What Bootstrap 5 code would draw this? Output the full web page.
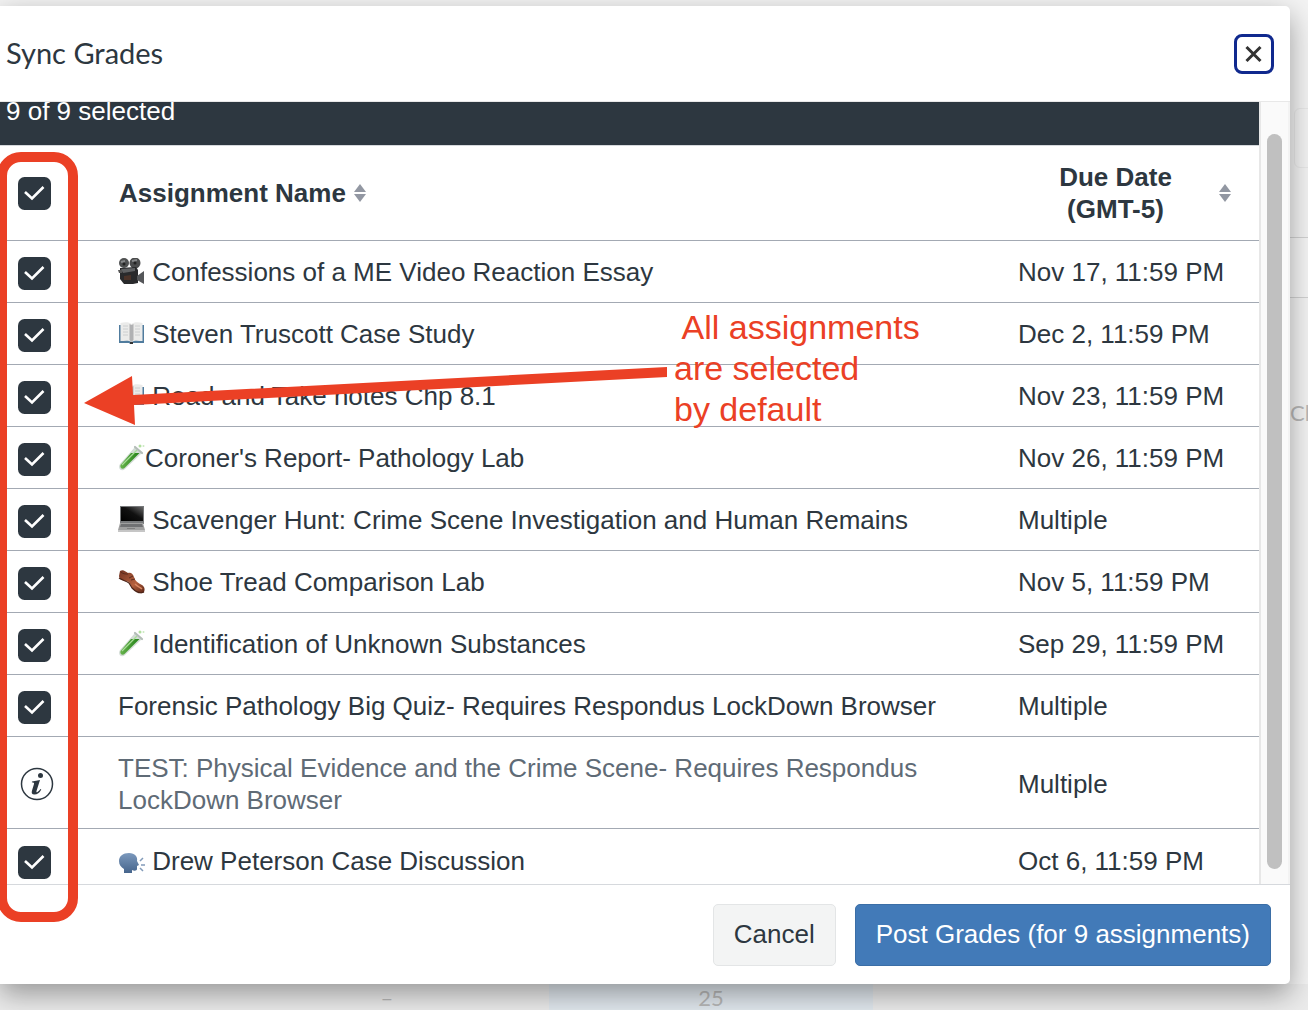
<!DOCTYPE html>
<html lang="en">
<head>
<meta charset="utf-8">
<meta name="viewport" content="width=device-width, initial-scale=1">
<title>Sync Grades</title>
<link rel="stylesheet" href="https://cdn.jsdelivr.net/npm/bootstrap@5.3.0/dist/css/bootstrap.min.css">
<style>
:root { --ink: #2d3740; --red: #eb4025; --line: #a3a9b3; }
body { font-family: "Liberation Sans", Arial, sans-serif; font-size: 26px; line-height: 32px; color: var(--ink); background: #f3f3f3; }
.stage { min-height: 100vh; }
/* gradebook behind the dialog */
.gradebook { z-index: 0; color: #b8b8b8; font: 22px/24px Lato, sans-serif; }
.side-rail { width: 60px; margin-right: -42px; background: #f3f3f3; }
.side-top { height: 108px; }
.side-box { height: 60px; border: 1px solid #e8e8e8; border-radius: 6px; margin-left: 4px; }
.side-gap { height: 69px; }
.side-band { height: 61px; border: solid #d2d2d2; border-width: 1px 0; background: #f5f5f5; }
.side-blank { height: 103px; }
.grade-row { height: 26px; background: #ebebeb; text-align: center; }
.grade-first { width: 225px; }
.grade-cell { width: 324px; padding-top: 2px; }
.grade-blue { background: #e1e8ee; }
/* dialog */
.dialog-box { z-index: 1; height: calc(100vh - 32px); margin: 6px 18px 26px 0; background: #fff; border-radius: 0 5px 5px 0; box-shadow: 0 10px 28px rgba(0,0,0,.36); }
.dialog-head { height: 96px; padding: 0 16px 0 6px; border-bottom: 1px solid #e8e8e8; }
.dialog-title { font: 29px/36px Lato, sans-serif; padding-bottom: 2px; }
.close-btn { width: 40px; height: 40px; border: 3px solid #10298e; border-radius: 8px; background: #fff; }
.scroll-pane { min-height: 0; }
.sheet { min-width: 0; }
.count-bar { height: 64px; margin-top: -21px; padding: 14px 6px; background: var(--ink); color: #fff; }
.assign { table-layout: fixed; color: var(--ink); border-top: 1px solid #d5d8dc; }
.assign th, .assign td { height: 62px; padding: 0 16px; vertical-align: middle; border-bottom: 1px solid var(--line); text-align: left; }
.assign thead th { height: 95px; }
.assign .tall td { height: 92px; padding-top: 2px; }
.assign .last td { height: 64px; }
.assign .pick { width: 102px; padding: 0 18px; }
.assign .due { width: 257px; padding-right: 28px; }
.assign td.due { padding-right: 0; white-space: nowrap; }
.tick { display: block; width: 33px; height: 33px; margin: 3px 0 0; border: 0; border-radius: 7px; }
thead .tick { margin-top: 0; }
.form-check-input.tick:checked { background-color: var(--ink); background-image: url("data:image/svg+xml,%3Csvg xmlns='http://www.w3.org/2000/svg' viewBox='0 0 33 33'%3E%3Cpath d='M7 15l7 6.500L25.500 10' fill='none' stroke='%23fff' stroke-width='2.600'/%3E%3C/svg%3E"); background-size: 100%; }
.sort-btn { font-weight: bold; color: inherit; background: none; border: 0; padding: 0 0 0 1px; }
.due .sort-btn { padding: 0; }
.due-label { padding-right: 6px; }
.pic { width: 27px; height: 27px; vertical-align: -4px; }
.muted-name { color: #5f6b76; }
.rail { width: 31px; padding: 32px 6px 15px 6px; background: #fafafa; border-left: 2px solid #e7e7e7; border-right: 2px solid #f3f3f3; }
.thumb { width: 17px; background: #c0c0c0; border-radius: 9px; }
.dialog-foot { height: 100px; padding: 19px 19px 18px; gap: 19px; border-top: 1px solid #d6d9dd; }
.foot-btn { font-size: 26px; line-height: 32px; padding: 13px 20px 15px; border-radius: 5px; }
.foot-cancel { color: var(--ink); background: #f3f4f4; border-color: #e3e5e6; }
.foot-post { color: #fff; background: #427ab8; border-color: #3b6ea6; }
/* annotations drawn over the dialog */
.note-ring { z-index: 3; left: -3px; top: 152px; width: 81px; height: 770px; border: 10px solid var(--red); border-radius: 24px; pointer-events: none; }
.note-arrow { z-index: 3; left: 84px; top: 360px; pointer-events: none; }
.note-text { z-index: 3; left: 674px; top: 307px; color: var(--red); font-size: 34px; line-height: 41px; white-space: pre; pointer-events: none; }
</style>
<script defer src="https://cdn.jsdelivr.net/npm/bootstrap@5.3.0/dist/js/bootstrap.bundle.min.js"></script>
</head>
<body>
<svg width="0" height="0" class="position-absolute" aria-hidden="true">
  <defs>
    <linearGradient id="liquid" x1="0" x2="1"><stop stop-color="#67b34c"/><stop offset="1" stop-color="#248319"/></linearGradient>
    <linearGradient id="screen" x1="0" y1="1" x2="1" y2="0"><stop stop-color="#000"/><stop offset=".55" stop-color="#111"/><stop offset="1" stop-color="#666"/></linearGradient>
    <linearGradient id="leather" x1="0" y1="0" x2="1" y2="1"><stop stop-color="#713323"/><stop offset=".6" stop-color="#b5603d"/><stop offset="1" stop-color="#572214"/></linearGradient>
    <linearGradient id="headfill" x2="0" y2="1"><stop stop-color="#7c99bd"/><stop offset="1" stop-color="#46658c"/></linearGradient>
    <symbol id="sort" viewBox="0 0 12 20"><path d="M6 1l6 8H0zM6 19l6-8H0z" fill="#9297a2"/></symbol>
    <symbol id="book" viewBox="0 0 27 27"><path d="M1 5h25v18H15l-1 1h-2l-1-1H1z" fill="#507c9e"/><path d="M2.500 3c4-1 9-1 11 1v18c-3-2-7-1-11-1zM24.500 3c-4-1-9-1-11 1v18c3-2 7-1 11-1z" fill="#ebebea"/><path d="M11.500 4l2 1v17l-2-2zM13.500 5l2-1v16l-2 2z" fill="#b0b1b3"/><path d="M5 6h5M5 9h5M5 12h5M5 15h5M17 6h5M17 9h5M17 12h5M17 15h5" stroke="#c4c6c9" stroke-width=".8"/><path d="M12 22h3v2h-3z" fill="#333"/></symbol>
    <symbol id="tube" viewBox="0 0 27 27"><path d="M17 3l7 6L7 25c-3 3-8 0-5-5z" fill="#d3dcd6"/><path d="M13 9h8.500L6.500 24c-2 2-5 0-4-3z" fill="url(#liquid)"/><path d="M4 21L19 6" stroke="#a8dc98" stroke-width="1.200"/><path d="M17 3l7 6" stroke="#b4bdb8" stroke-width="2.200" stroke-linecap="round"/><circle cx="22" cy="2" r="1.500" fill="#b2e0a0"/><circle cx="25.500" cy="2" r="1" fill="#caeabf"/></symbol>
    <symbol id="camera" viewBox="0 0 27 27"><circle cx="6" cy="5" r="5" fill="#4f5152"/><circle cx="17" cy="5" r="5.500" fill="#4a4b4c"/><path d="M3 4l4-1M14 3l5-1" stroke="#858789" stroke-width="2"/><circle cx="6" cy="6" r="1.500" fill="#222"/><circle cx="17" cy="5" r="1.500" fill="#222"/><path d="M2 10l16-1 2 3v13l-5 1H6l-4-5z" fill="#292a2c"/><path d="M3 11l14-1v3l-12 2z" fill="#606264"/><path d="M19 18l7-5v13l-7-4z" fill="#55575a"/><path d="M6 18l7-1v5H6z" fill="#4b3329"/><path d="M0 12h4v3H1z" fill="#555"/></symbol>
    <symbol id="laptop" viewBox="0 0 27 27"><path d="M2 0h24v18H2z" fill="#77797b"/><path d="M3 1h22v14H3z" fill="url(#screen)"/><path d="M2 17h23l2 7H0z" fill="#a0a0a0"/><path d="M3 18h21l1 3H2z" fill="#707173"/><path d="M9 22h8v1H9z" fill="#808080"/><path d="M0 24h27v2H0z" fill="#c6c6c6"/></symbol>
    <symbol id="shoe" viewBox="0 0 27 27"><path d="M2 3c3-2 5 0 8 2 3-1 5 1 6 4 1 4 4 6 8 8 3 2 3 5 2 7-3 3-8 0-12-4l-3-6C5 13 1 11 1 8z" fill="url(#leather)"/><path d="M1 10c3 2 7 3 10 5l3 5c4 4 8 6 12 4" fill="none" stroke="#4b2418" stroke-width="1.200"/><path d="M3 4c2 2 4 2 7 2M11 10l4-2M13 12l4-1" fill="none" stroke="#5c2c1e" stroke-width="1"/><path d="M17 16c3 3 5 3 7 5" stroke="#d98761" stroke-width="1.500" fill="none"/></symbol>
    <symbol id="speak" viewBox="0 0 27 27"><path d="M11 6c6 0 9 4 8 8l2 4-2 1v3c0 2-3 2-5 1v3H6v-4C3 20 1 18 1 14c0-5 4-8 10-8z" fill="url(#headfill)"/><path d="M22 14l3-3M23 18h4M22 21l3 3" stroke="#829bb9" stroke-width="1.500"/></symbol>
  </defs>
</svg>

<div class="stage position-relative overflow-hidden">
  <div class="gradebook position-absolute top-0 start-0 w-100 h-100 d-flex flex-column" aria-hidden="true">
    <div class="side-rail flex-grow-1 align-self-end">
      <div class="side-top"></div><div class="side-box"></div><div class="side-gap"></div><div class="side-band"></div><div class="side-blank"></div>
      <div>Cl</div>
    </div>
    <div class="grade-row d-flex">
      <div class="grade-first"></div><div class="grade-cell">–</div><div class="grade-cell grade-blue">25</div><div class="flex-grow-1"></div>
    </div>
  </div>

  <div class="dialog-box position-relative d-flex flex-column" role="dialog" aria-labelledby="dialogTitle">
    <header class="dialog-head d-flex align-items-center justify-content-between flex-shrink-0">
      <h1 class="dialog-title m-0" id="dialogTitle">Sync Grades</h1>
      <button type="button" class="close-btn p-0 d-flex align-items-center justify-content-center" aria-label="Close">
        <svg width="18" height="18" viewBox="0 0 18 18"><path d="M1.500 2l14 14M15.500 2l-14 14" stroke="#333" stroke-width="3"/></svg>
      </button>
    </header>

    <div class="scroll-pane d-flex flex-grow-1 overflow-hidden">
      <div class="sheet flex-grow-1">
        <div class="count-bar">9 of 9 selected</div>
        <table class="assign w-100">
          <thead>
            <tr>
              <th class="pick"><input class="form-check-input tick" type="checkbox" checked aria-label="Select all assignments"></th>
              <th><button type="button" class="sort-btn d-flex align-items-center gap-2">Assignment Name<svg width="12" height="20"><use href="#sort"/></svg></button></th>
              <th class="due"><button type="button" class="sort-btn d-flex align-items-center w-100"><span class="due-label flex-grow-1">Due Date<br>(GMT-5)</span><svg width="12" height="20"><use href="#sort"/></svg></button></th>
            </tr>
          </thead>
          <tbody>
            <tr><td class="pick"><input id="a1" class="form-check-input tick" type="checkbox" checked></td><td><label for="a1"><svg class="pic"><use href="#camera"/></svg> Confessions of a ME Video Reaction Essay</label></td><td class="due">Nov 17, 11:59 PM</td></tr>
            <tr><td class="pick"><input id="a2" class="form-check-input tick" type="checkbox" checked></td><td><label for="a2"><svg class="pic"><use href="#book"/></svg> Steven Truscott Case Study</label></td><td class="due">Dec 2, 11:59 PM</td></tr>
            <tr><td class="pick"><input id="a3" class="form-check-input tick" type="checkbox" checked></td><td><label for="a3"><svg class="pic"><use href="#book"/></svg> Read and Take notes Chp 8.1</label></td><td class="due">Nov 23, 11:59 PM</td></tr>
            <tr><td class="pick"><input id="a4" class="form-check-input tick" type="checkbox" checked></td><td><label for="a4"><svg class="pic"><use href="#tube"/></svg>Coroner's Report- Pathology Lab</label></td><td class="due">Nov 26, 11:59 PM</td></tr>
            <tr><td class="pick"><input id="a5" class="form-check-input tick" type="checkbox" checked></td><td><label for="a5"><svg class="pic"><use href="#laptop"/></svg> Scavenger Hunt: Crime Scene Investigation and Human Remains</label></td><td class="due">Multiple</td></tr>
            <tr><td class="pick"><input id="a6" class="form-check-input tick" type="checkbox" checked></td><td><label for="a6"><svg class="pic"><use href="#shoe"/></svg> Shoe Tread Comparison Lab</label></td><td class="due">Nov 5, 11:59 PM</td></tr>
            <tr><td class="pick"><input id="a7" class="form-check-input tick" type="checkbox" checked></td><td><label for="a7"><svg class="pic"><use href="#tube"/></svg> Identification of Unknown Substances</label></td><td class="due">Sep 29, 11:59 PM</td></tr>
            <tr><td class="pick"><input id="a8" class="form-check-input tick" type="checkbox" checked></td><td><label for="a8">Forensic Pathology Big Quiz- Requires Respondus LockDown Browser</label></td><td class="due">Multiple</td></tr>
            <tr class="tall"><td class="pick"><svg class="d-block" width="38" height="34" viewBox="-3 0 38 34" role="img" aria-label="Information"><circle cx="16" cy="17" r="15.500" fill="none" stroke="#2d3740" stroke-width="1.500"/><circle cx="19.500" cy="8.500" r="2.500" fill="#2d3740"/><path d="M11 14.500q4-1 8-1.500l-3.500 11q-.5 2 1 1 2-1.500 3-3l.8.5q-2.500 5-7 5-3.500 0-2.300-4l2-6.500q.6-1.700-2.200-1.700z" fill="#2d3740"/></svg></td><td class="muted-name">TEST: Physical Evidence and the Crime Scene- Requires Respondus LockDown Browser</td><td class="due">Multiple</td></tr>
            <tr class="last"><td class="pick"><input id="a10" class="form-check-input tick" type="checkbox" checked></td><td><label for="a10"><svg class="pic"><use href="#speak"/></svg> Drew Peterson Case Discussion</label></td><td class="due">Oct 6, 11:59 PM</td></tr>
          </tbody>
        </table>
      </div>
      <div class="rail d-flex flex-shrink-0"><div class="thumb"></div></div>
    </div>

    <footer class="dialog-foot d-flex justify-content-end flex-shrink-0">
      <button type="button" class="btn foot-btn foot-cancel">Cancel</button>
      <button type="button" class="btn foot-btn foot-post">Post Grades (for 9 assignments)</button>
    </footer>
  </div>

  <div class="note-ring position-absolute"></div>
  <svg class="note-arrow position-absolute" width="590" height="70" viewBox="0 0 590 70" aria-hidden="true"><path d="M0 43L48 16l1 19L583 7v10L50 45l1 20z" fill="#eb4025"/></svg>
  <div class="note-text position-absolute"> All assignments
are selected
by default</div>
</div>
</body>
</html>
